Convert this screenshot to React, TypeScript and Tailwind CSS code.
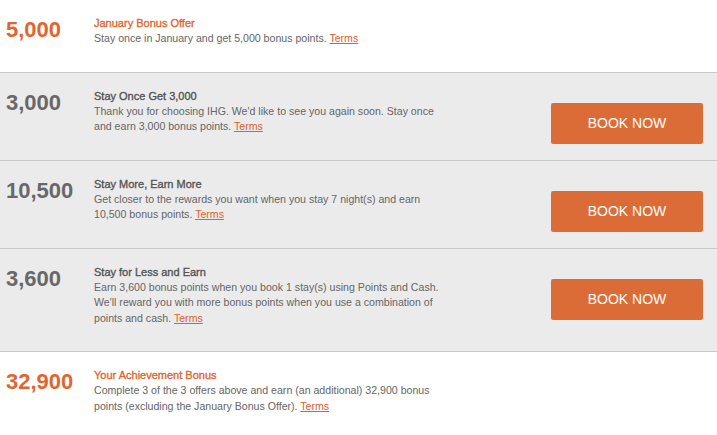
import React from "react";

type Offer = {
  points: string;
  title: string;
  body: string;
  highlight?: boolean;
  book?: boolean;
};

const offers: Offer[] = [
  {
    points: "5,000",
    title: "January Bonus Offer",
    body: "Stay once in January and get 5,000 bonus points.",
    highlight: true,
  },
  {
    points: "3,000",
    title: "Stay Once Get 3,000",
    body: "Thank you for choosing IHG. We'd like to see you again soon. Stay once and earn 3,000 bonus points.",
    book: true,
  },
  {
    points: "10,500",
    title: "Stay More, Earn More",
    body: "Get closer to the rewards you want when you stay 7 night(s) and earn 10,500 bonus points.",
    book: true,
  },
  {
    points: "3,600",
    title: "Stay for Less and Earn",
    body: "Earn 3,600 bonus points when you book 1 stay(s) using Points and Cash. We'll reward you with more bonus points when you use a combination of points and cash.",
    book: true,
  },
  {
    points: "32,900",
    title: "Your Achievement Bonus",
    body: "Complete 3 of the 3 offers above and earn (an additional) 32,900 bonus points (excluding the January Bonus Offer).",
    highlight: true,
  },
];

function OfferRow({ offer, last }: { offer: Offer; last: boolean }) {
  return (
    <div
      className={
        "flex items-start pt-[15px] " +
        (offer.highlight ? "bg-white " : "bg-[#ebebeb] ") +
        (last ? "" : "border-b border-[#c8c8c8]")
      }
    >
      <div
        className={
          "w-[94px] shrink-0 pl-[6px] pt-[2px] text-[22px] font-bold leading-[25px] " +
          (offer.highlight ? "text-[#e0662f]" : "text-[#686868]")
        }
      >
        {offer.points}
      </div>
      <div className="w-[352px] shrink-0 pb-[25px]">
        <div
          className={
            "text-[11px] leading-[16px] [-webkit-text-stroke:0.35px_currentColor] " +
            (offer.highlight ? "text-[#e0662f]" : "text-[#555555]")
          }
        >
          {offer.title}
        </div>
        <p className="text-[10.6px] leading-[15.5px] text-[#666666]">
          {offer.body}{" "}
          <a href="#" className="text-[#e0602e] underline">
            Terms
          </a>
        </p>
      </div>
      {offer.book && (
        <div className="ml-auto mr-[14px] pt-[15px]">
          <button className="h-[41px] w-[152px] rounded-[2px] bg-[#dc6c37] text-[14px] text-white">
            BOOK NOW
          </button>
        </div>
      )}
    </div>
  );
}

export default function App() {
  return (
    <div
      className="w-[717px] h-[435px] overflow-hidden bg-white"
      style={{ fontFamily: '"Liberation Sans", Arial, sans-serif' }}
    >
      {offers.map((o, i) => (
        <OfferRow key={o.points} offer={o} last={i === offers.length - 1} />
      ))}
    </div>
  );
}
